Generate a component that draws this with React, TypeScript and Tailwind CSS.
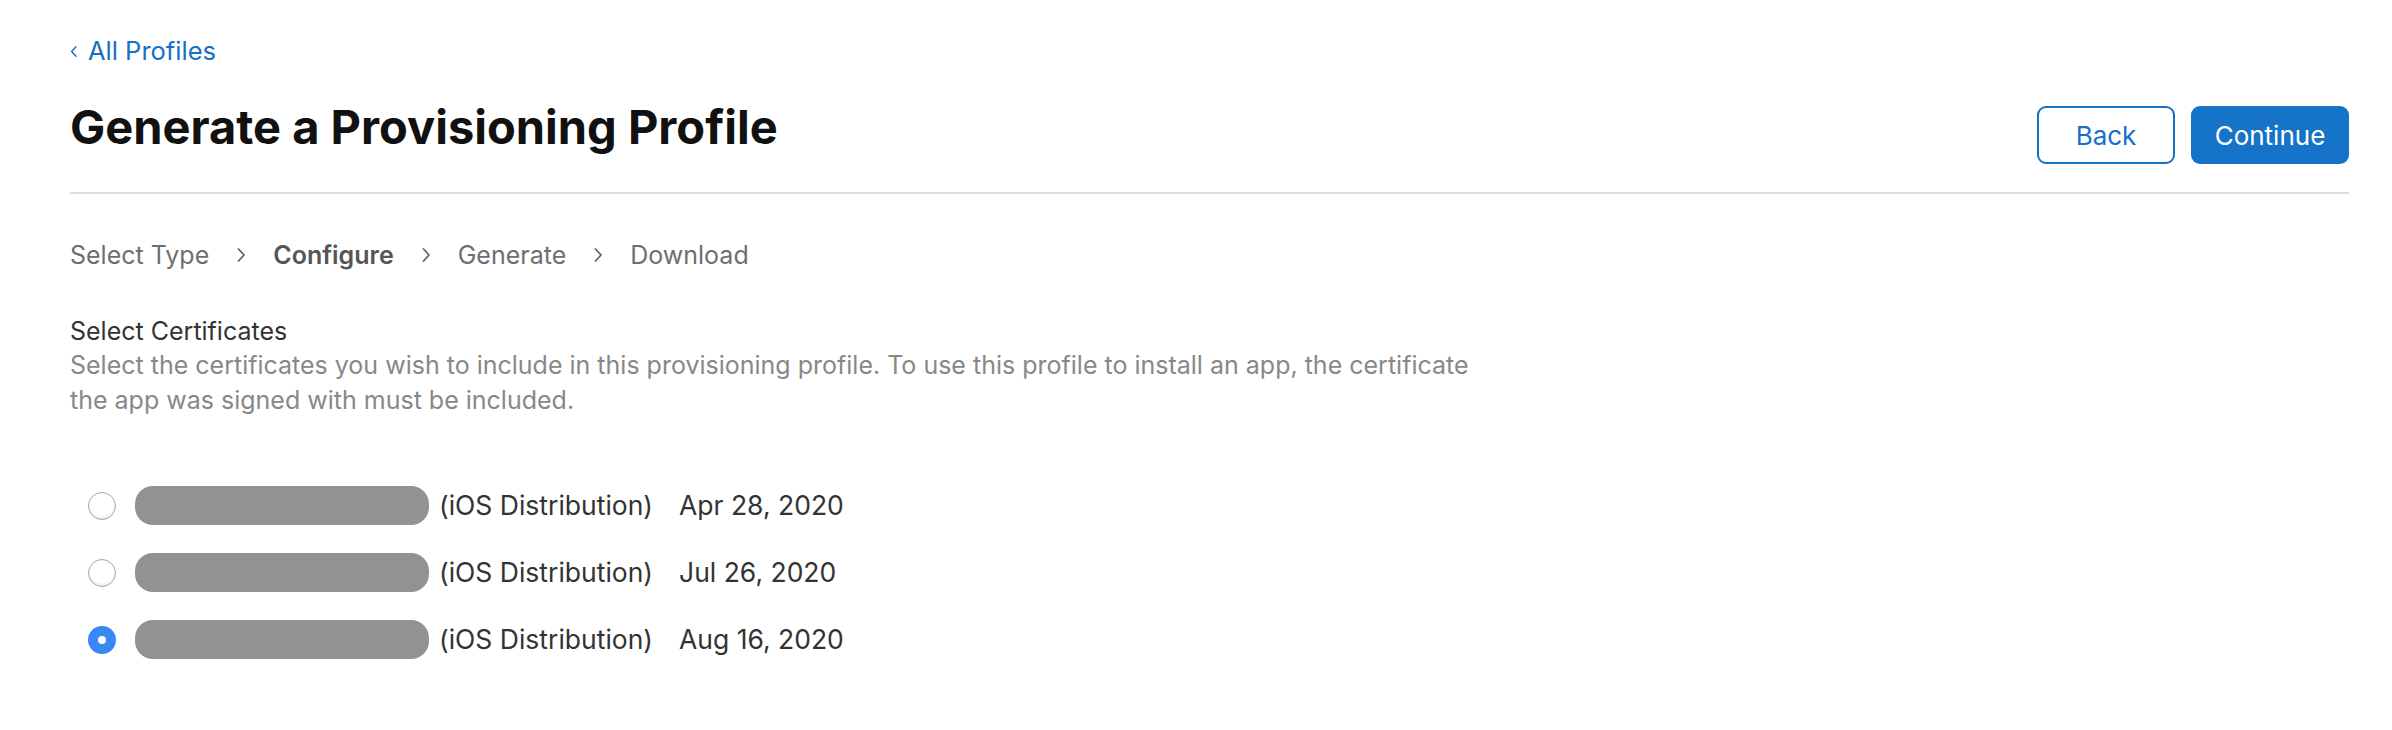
import React from "react";

const font = { fontFamily: 'Inter, "Noto Sans", sans-serif' };

function Chevron({ className, dir = "right" }: { className?: string; dir?: "left" | "right" }) {
  return (
    <svg viewBox="0 0 10 16" className={className} fill="none" stroke="currentColor" strokeWidth="1.7" strokeLinecap="round" strokeLinejoin="round">
      {dir === "right" ? <path d="M2.5 2 L8 8 L2.5 14" /> : <path d="M7.5 2 L2 8 L7.5 14" />}
    </svg>
  );
}

function Radio({ checked }: { checked?: boolean }) {
  if (checked) {
    return (
      <div className="w-[28px] h-[28px] rounded-full bg-[#3a88f5] flex items-center justify-center shrink-0">
        <div className="w-[8px] h-[8px] rounded-full bg-white" />
      </div>
    );
  }
  return (
    <div className="w-[28px] h-[28px] rounded-full border-[1.5px] border-[#a6a6a6] bg-white shadow-[inset_0_-2px_2px_rgba(0,0,0,0.08)] shrink-0" />
  );
}

const rows = [
  { date: "Apr 28, 2020", checked: false },
  { date: "Jul 26, 2020", checked: false },
  { date: "Aug 16, 2020", checked: true },
];

export default function App() {
  return (
    <div className="w-full h-[730px] bg-white pl-[70px] pr-[43px] pt-[36px]" style={font}>
      <a className="flex items-center gap-[10px] text-[25.5px] leading-[30px] text-[#1570c6]">
        <Chevron dir="left" className="w-[8px] h-[15px]" />
        <span>All Profiles</span>
      </a>

      <div className="mt-[34px] flex items-start justify-between border-b-2 border-[#dedede] pb-[28px]">
        <h1 className="text-[47px] leading-[54px] font-bold text-[#111111]">
          Generate a Provisioning Profile
        </h1>
        <div className="mt-[6px] flex gap-[16px]">
          <button className="w-[138px] h-[58px] rounded-[9px] border-2 border-[#1570c6] text-[#1570c6] text-[26px] bg-white">
            Back
          </button>
          <button className="w-[158px] h-[58px] rounded-[9px] bg-[#1573c8] text-white text-[26px]">
            Continue
          </button>
        </div>
      </div>

      <div className="mt-[46px] flex items-center gap-[27px] text-[25px] leading-[30px] text-[#6e6e73]">
        <span>Select Type</span>
        <Chevron className="w-[10px] h-[16px] text-[#606060]" />
        <span className="font-semibold text-[#555555]">Configure</span>
        <Chevron className="w-[10px] h-[16px] text-[#606060]" />
        <span>Generate</span>
        <Chevron className="w-[10px] h-[16px] text-[#606060]" />
        <span>Download</span>
      </div>

      <div className="mt-[46px] text-[25px] leading-[30px] text-[#333333]">Select Certificates</div>
      <p className="mt-[2px] max-w-[1430px] text-[25px] leading-[35px] text-[#888888]">
        Select the certificates you wish to include in this provisioning profile. To use this profile to install an app, the certificate the app was signed with must be included.
      </p>

      <div className="mt-[54px] flex flex-col">
        {rows.map((r, i) => (
          <div key={i} className="h-[67px] flex items-center pl-[18px] text-[26.5px] text-[#333333]">
            <Radio checked={r.checked} />
            <div className="ml-[19px] w-[294px] h-[39px] rounded-[18px] bg-[#929292]" />
            <span className="ml-[10px]">(iOS Distribution)</span>
            <span className="ml-[26px]">{r.date}</span>
          </div>
        ))}
      </div>
    </div>
  );
}
